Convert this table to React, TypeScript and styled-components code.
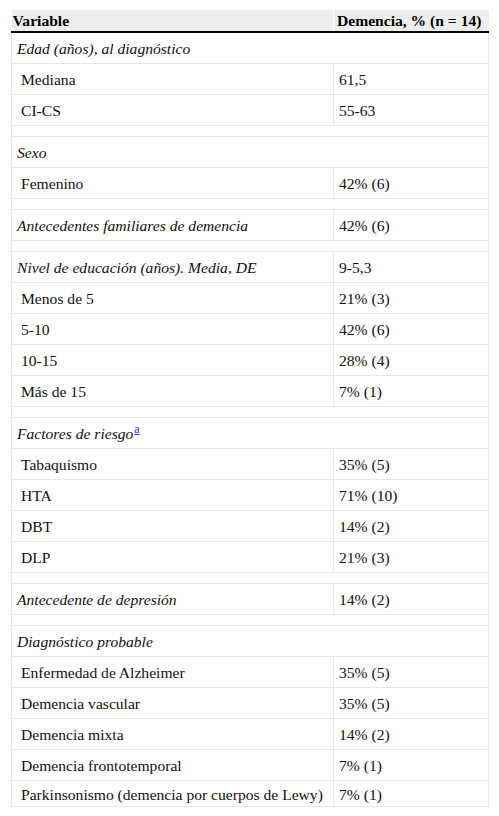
import styled, { createGlobalStyle } from 'styled-components'

const GlobalStyle = createGlobalStyle`
  body {
    margin: 0;
    background: #fff;
    font-family: "Liberation Serif", "Times New Roman", serif;
    color: #111;
  }
`

type Row =
  | { kind: 'group'; label: string; value?: string; note?: string }
  | { kind: 'item'; label: string; value: string }
  | { kind: 'gap' }

const rows: Row[] = [
  { kind: 'group', label: 'Edad (años), al diagnóstico' },
  { kind: 'item', label: 'Mediana', value: '61,5' },
  { kind: 'item', label: 'CI-CS', value: '55-63' },
  { kind: 'gap' },
  { kind: 'group', label: 'Sexo' },
  { kind: 'item', label: 'Femenino', value: '42% (6)' },
  { kind: 'gap' },
  { kind: 'group', label: 'Antecedentes familiares de demencia', value: '42% (6)' },
  { kind: 'gap' },
  { kind: 'group', label: 'Nivel de educación (años). Media, DE', value: '9-5,3' },
  { kind: 'item', label: 'Menos de 5', value: '21% (3)' },
  { kind: 'item', label: '5-10', value: '42% (6)' },
  { kind: 'item', label: '10-15', value: '28% (4)' },
  { kind: 'item', label: 'Más de 15', value: '7% (1)' },
  { kind: 'gap' },
  { kind: 'group', label: 'Factores de riesgo', note: 'a' },
  { kind: 'item', label: 'Tabaquismo', value: '35% (5)' },
  { kind: 'item', label: 'HTA', value: '71% (10)' },
  { kind: 'item', label: 'DBT', value: '14% (2)' },
  { kind: 'item', label: 'DLP', value: '21% (3)' },
  { kind: 'gap' },
  { kind: 'group', label: 'Antecedente de depresión', value: '14% (2)' },
  { kind: 'gap' },
  { kind: 'group', label: 'Diagnóstico probable' },
  { kind: 'item', label: 'Enfermedad de Alzheimer', value: '35% (5)' },
  { kind: 'item', label: 'Demencia vascular', value: '35% (5)' },
  { kind: 'item', label: 'Demencia mixta', value: '14% (2)' },
  { kind: 'item', label: 'Demencia frontotemporal', value: '7% (1)' },
  { kind: 'item', label: 'Parkinsonismo (demencia por cuerpos de Lewy)', value: '7% (1)' },
]

export default function App() {
  return (
    <Page>
      <GlobalStyle />
      <Table>
        <colgroup>
          <col style={{ width: 322 }} />
          <col />
        </colgroup>
        <thead>
          <tr>
            <Head>Variable</Head>
            <Head $right>Demencia, % (n = 14)</Head>
          </tr>
        </thead>
        <tbody>
          {rows.map((r, i) => {
            const last = i === rows.length - 1
            if (r.kind === 'gap') {
              return (
                <tr key={i}>
                  <Gap colSpan={2} />
                </tr>
              )
            }
            if (r.kind === 'group') {
              const label = (
                <>
                  {r.label}
                  {r.note && <Note href='#'>{r.note}</Note>}
                </>
              )
              return r.value ? (
                <tr key={i}>
                  <Cell $group>{label}</Cell>
                  <Cell>{r.value}</Cell>
                </tr>
              ) : (
                <tr key={i}>
                  <Cell $group colSpan={2}>
                    {label}
                  </Cell>
                </tr>
              )
            }
            return (
              <tr key={i}>
                <Cell $indent $last={last}>{r.label}</Cell>
                <Cell $last={last}>{r.value}</Cell>
              </tr>
            )
          })}
        </tbody>
      </Table>
    </Page>
  )
}

const Page = styled.div`
  padding: 10px 11px;
`

const Table = styled.table`
  width: 478px;
  border-collapse: collapse;
  table-layout: fixed;
  font-family: "Liberation Serif", "Times New Roman", serif;
  font-size: 15.6px;
  color: #111;
`

const Head = styled.th<{ $right?: boolean }>`
  height: 21px;
  padding: ${p => (p.$right ? '0 0 0 3px' : '0 1px')};
  text-align: left;
  font-family: "Liberation Serif", "Times New Roman", serif;
  font-size: 15.6px;
  font-weight: 700;
  color: #000;
  background: #eeeeee;
  border-bottom: 2px solid #000;
  border-left: ${p => (p.$right ? '1px solid #fff' : '0')};
  vertical-align: middle;
  line-height: 18px;
  white-space: nowrap;
`

const Cell = styled.td<{ $group?: boolean; $indent?: boolean; $last?: boolean }>`
  height: ${p => (p.$last ? '23px' : '28px')};
  padding: 2px 0 0 ${p => (p.$indent ? '9px' : '5px')};
  border: 1px solid #e8e8e8;
  font-family: "Liberation Serif", "Times New Roman", serif;
  font-size: 15.6px;
  font-style: ${p => (p.$group ? 'italic' : 'normal')};
  vertical-align: middle;
  white-space: nowrap;
  line-height: 18px;
`

const Gap = styled.td`
  height: 10px;
  padding: 0;
  border: 1px solid #e8e8e8;
`

const Note = styled.a`
  font-style: normal;
  font-size: 12px;
  color: #3333cc;
  vertical-align: 6px;
  line-height: 0;
  margin-left: 1px;
`
